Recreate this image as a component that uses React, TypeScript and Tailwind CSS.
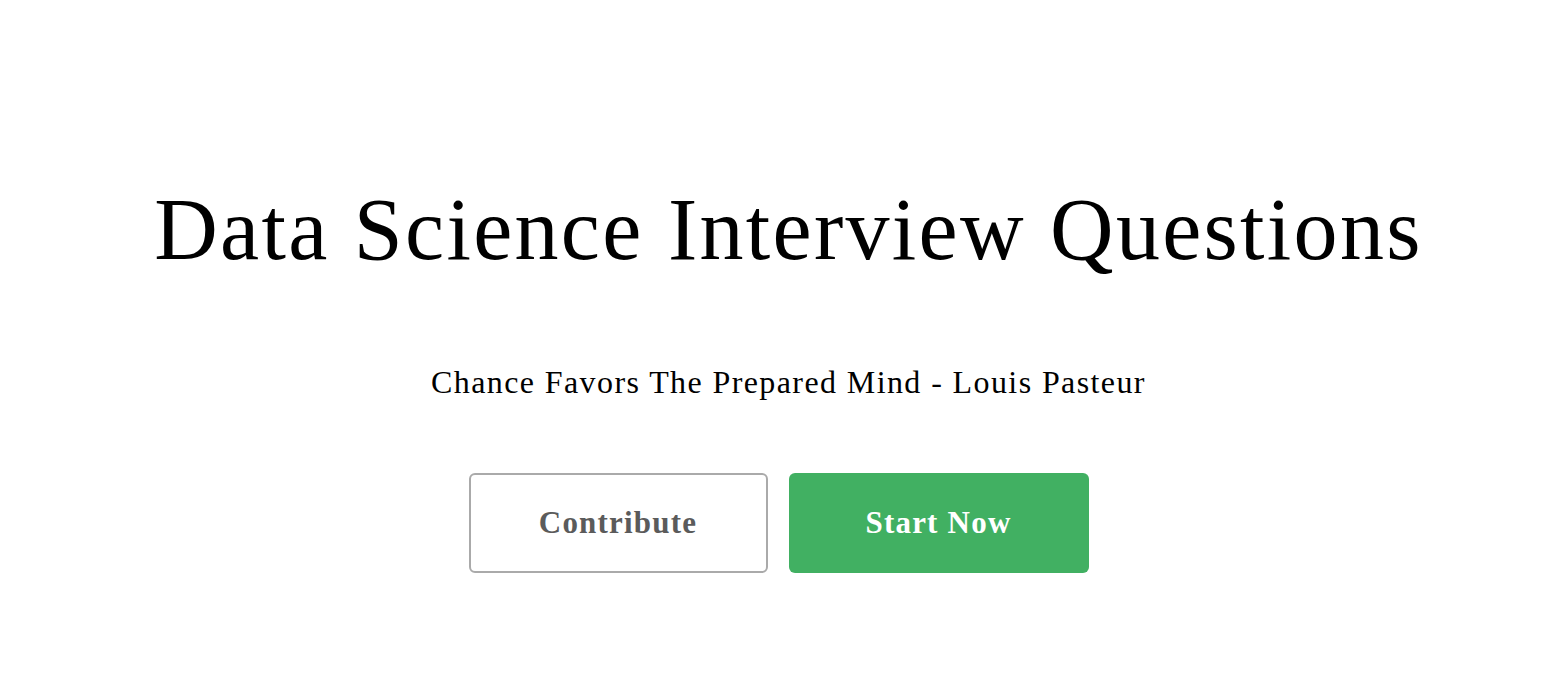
const App = () => {
  return (
    <div className="min-h-[700px] w-full bg-white flex flex-col items-center font-['Liberation_Serif',serif] text-black">
      <h1 className="mt-[176px] ml-[10px] text-[88px] leading-[108px] tracking-[2.3px]">Data Science Interview Questions</h1>
      <p className="mt-[79px] ml-[10px] text-[32px] leading-[38px] tracking-[1.4px]">Chance Favors The Prepared Mind - Louis Pasteur</p>
      <div className="mt-[72px] mr-[10px] flex gap-[21px]">
        <button className="w-[299px] h-[100px] rounded-[6px] border-2 border-[#aaaaaa] bg-white text-[#5b5b5b] text-[31px] font-bold tracking-[1.2px]">
          Contribute
        </button>
        <button className="w-[300px] h-[100px] rounded-[6px] bg-[#41b062] text-white text-[31px] font-bold tracking-[1.2px]">
          Start Now
        </button>
      </div>
    </div>
  );
};
export default App;
